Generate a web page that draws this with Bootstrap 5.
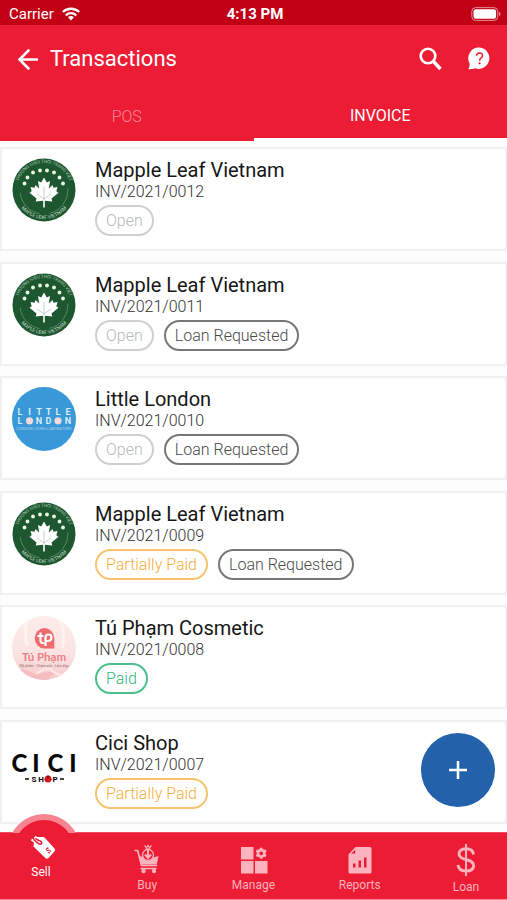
<!DOCTYPE html>
<html lang="en">
<head>
<meta charset="utf-8">
<meta name="viewport" content="width=device-width, initial-scale=1">
<title>Transactions</title>
<link href="https://cdn.jsdelivr.net/npm/bootstrap@5.3.0/dist/css/bootstrap.min.css" rel="stylesheet">
<style>
  :root { --brand: #ed1c35; --brand-dark: #c20015; --pale: #fdb3bd; }
  body { font-family: Roboto, "Liberation Sans", sans-serif; background: #fdfdfd; color: #1d1d1d; }
  a { text-decoration: none; }
  svg { display: block; flex: none; }
  .status-bar { background: var(--brand-dark); height: 25px; padding: 2px 6px 0 9px; font-size: 15px; line-height: 24px; }
  .status-bar > * { flex: 1 1 0; }
  .app-header { background: var(--brand); }
  .title-row { height: 68px; padding: 0 16px; }
  .title-row h1 { font-size: 22px; line-height: 28px; font-weight: 400; margin: 0 auto 0 10px; }
  .icon-btn { background: none; border: 0; padding: 0; color: #fff; }
  .tab-link { flex: 1 1 0; height: 48px; font-size: 16px; line-height: 24px; color: #ff8795; font-weight: 300; border: 0; background: none; }
  .tab-link.current { color: #fff; font-weight: 400; border-bottom: 3px solid #fff; }
  .invoice-list { padding: 6px 0 8px; }
  .invoice { min-height: 104px; padding: 9px 10px; gap: 19px; background: #fff; border: 2px solid #f0f0f0; color: inherit; }
  .invoice h2 { font-size: 20px; line-height: 24px; font-weight: 400; color: #161616; }
  .number { font-size: 16px; line-height: 20px; font-weight: 300; color: #333; }
  .pills { margin-top: 3px; gap: 10px; }
  .pill { border: 2px solid; border-radius: 16px; padding: 0 9px; height: 31px; font-size: 16px; line-height: 28px; font-weight: 300; }
  .open { color: #b9b9b9; border-color: #d0d0d0; }
  .loan { color: #4a4a4a; border-color: #777; }
  .partial { color: #f5ad3d; border-color: #f8c36e; }
  .paid { color: #2fb67c; border-color: #4bbf8d; }
  .fab { position: absolute; right: 12px; bottom: 25px; width: 74px; height: 74px; background: #2361ab; color: #fff; border: 0; }
  .bottom-nav { background: var(--brand); height: 68px; padding: 0 9px; border-top: 1px solid #f24a5e; border-bottom: 1px solid #f88794; }
  .nav-tab { width: 64px; padding-top: 11px; gap: 3px; color: var(--pale); font-size: 12px; line-height: 16px; }
  .nav-tab.current { padding-top: 2px; color: #fff; }
  .nav-tab.current svg, .nav-tab.current span { position: relative; z-index: 2; }
  .nav-tab.current::before { content: ""; position: absolute; left: 8px; top: -19px; width: 72px; height: 72px; border-radius: 50%; background: #f78491; clip-path: inset(0 0 53px 0); }
  .nav-tab.current::after { content: ""; position: absolute; left: 14px; top: -13px; width: 60px; height: 60px; border-radius: 50%; background: var(--brand); }
</style>
<script src="https://cdn.jsdelivr.net/npm/bootstrap@5.3.0/dist/js/bootstrap.bundle.min.js"></script>
</head>
<body>
<svg width="0" height="0" class="position-absolute" aria-hidden="true">
  <defs>
    <path id="arc-top" d="M5 32a27 27 0 0 1 54 0"/>
    <path id="arc-bottom" d="M3 32a29 29 0 0 0 58 0"/>
    <symbol id="maple" viewBox="0 0 64 64">
      <circle cx="32" cy="32" r="31.500" fill="#1d5730"/>
      <circle cx="32" cy="32" r="24" fill="none" stroke="#6f9a78" stroke-width=".7" stroke-dasharray="32 10 30 76"/>
      <text font-size="4.500" fill="#a9c5ae" text-anchor="middle"><textPath href="#arc-top" startOffset="50%">THƯƠNG HIỆU THỜI TRANG VIỆT</textPath></text>
      <text font-size="5" fill="#c6d9c9" text-anchor="middle"><textPath href="#arc-bottom" startOffset="50%">MAPLE LEAF VIETNAM</textPath></text>
      <g fill="#e9f6e4"><circle cx="12.500" cy="25.500" r="1.900"/><circle cx="15.500" cy="19.500" r="1.900"/><circle cx="21" cy="14.500" r="1.900"/><circle cx="28" cy="12.500" r="1.900"/><circle cx="35" cy="12.500" r="1.900"/><circle cx="42" cy="14.500" r="1.900"/><circle cx="47.500" cy="19.500" r="1.900"/><circle cx="51" cy="25.500" r="1.900"/></g>
      <path fill="#fff" d="M32 19.500L34.800 24.500 38 23 36.800 30.500 40.500 27 41.500 29.700 45.500 29 44.300 33.300 46.500 34.800 39.500 40.500 40.300 43.500 32.800 42.700V49.500H31.200V42.700L23.700 43.500 24.500 40.500 17.500 34.800 19.700 33.300 18.500 29 22.500 29.700 23.500 27 27.200 30.500 26 23 29.200 24.500z"/>
      <path d="M32 29v13m0-1l7-5m-7 5l-7-5" stroke="#9db5a1" stroke-width=".6" fill="none"/>
    </symbol>
  </defs>
</svg>
<div class="d-flex flex-column min-vh-100">
  <div class="status-bar d-flex align-items-center text-white">
    <div class="d-flex align-items-center gap-2">
      <span>Carrier</span>
      <svg width="18" height="14" viewBox="0 0 18 14" fill="none" stroke="#fff" stroke-width="2.300"><path d="M.8 5a12 12 0 0 1 16.400 0M3.800 8.300a7.500 7.500 0 0 1 10.400 0"/><path d="M9 13.500l-3-3.200a4.200 4.200 0 0 1 6 0z" fill="#fff" stroke="none"/></svg>
    </div>
    <div class="text-center fw-bold">4:13 PM</div>
    <div class="d-flex justify-content-end">
      <svg width="30" height="14" viewBox="0 0 30 14"><rect x=".8" y=".6" width="26" height="12.800" rx="3.800" fill="none" stroke="#e58a94"/><rect x="2.500" y="2.300" width="22.600" height="9.400" rx="2.200" fill="#fff"/><path d="M28 4.800q1.600.6 1.600 2.200T28 9.200z" fill="#e58a94"/></svg>
    </div>
  </div>
  <header class="app-header">
    <div class="title-row d-flex align-items-center text-white">
      <button class="icon-btn" aria-label="Back"><svg width="24" height="24" viewBox="0 0 24 24" fill="none" stroke="currentColor" stroke-width="2.600" stroke-linecap="round"><path d="M21 12.500H3.500M12.500 3.500l-9 9 9 9"/></svg></button>
      <h1>Transactions</h1>
      <button class="icon-btn" aria-label="Search"><svg width="24" height="24" viewBox="0 0 24 24" fill="none" stroke="currentColor"><circle cx="9" cy="9" r="7.300" stroke-width="2.600"/><path d="M14.500 14.500l7 7.500" stroke-width="3.500"/></svg></button>
      <button class="icon-btn ms-4" aria-label="Help"><svg width="24" height="24" viewBox="0 0 24 24"><path d="M12.500.5a10.700 10.700 0 1 1-4.300 20.800q-2.500 1-6.900.9 1.700-2.500 1.200-6A10.700 10.700 0 0 1 12.500.5z" fill="#fff"/><path d="M9.500 8.800q.2-2.800 3.100-2.800 3 .1 2.900 2.700 0 1.500-1.600 2.500-1.300.9-1.300 2.600" fill="none" stroke="#ed1c35" stroke-width="1.500"/><circle cx="12.600" cy="16.300" r="1.100" fill="#ed1c35"/></svg></button>
    </div>
    <div class="d-flex" role="tablist">
      <button class="tab-link" role="tab" aria-selected="false">POS</button>
      <button class="tab-link current" role="tab" aria-selected="true">INVOICE</button>
    </div>
  </header>
  <main class="invoice-list flex-grow-1 d-flex flex-column justify-content-between position-relative">
    <a href="#" class="invoice d-flex align-items-start">
      <svg width="64" height="64"><use href="#maple"/></svg>
      <div><h2 class="m-0">Mapple Leaf Vietnam</h2><div class="number">INV/2021/0012</div>
      <div class="pills d-flex"><span class="pill open">Open</span></div></div>
    </a>
    <a href="#" class="invoice d-flex align-items-start">
      <svg width="64" height="64"><use href="#maple"/></svg>
      <div><h2 class="m-0">Mapple Leaf Vietnam</h2><div class="number">INV/2021/0011</div>
      <div class="pills d-flex"><span class="pill open">Open</span><span class="pill loan">Loan Requested</span></div></div>
    </a>
    <a href="#" class="invoice d-flex align-items-start">
      <svg width="64" height="64" viewBox="0 0 64 64" text-anchor="middle"><circle cx="32" cy="32" r="32" fill="#3898d8"/>
        <g fill="#dcecf5" font-size="9" font-weight="700"><text y="28"><tspan x="8">L</tspan><tspan x="17.500">I</tspan><tspan x="27">T</tspan><tspan x="36.500">T</tspan><tspan x="46">L</tspan><tspan x="56">E</tspan></text><text y="37"><tspan x="8">L</tspan><tspan x="27">N</tspan><tspan x="36.500">D</tspan><tspan x="56">N</tspan></text></g>
        <circle cx="17.500" cy="33.800" r="3.600" fill="#f7d9d9"/><circle cx="46" cy="33.800" r="3.600" fill="#f7d9d9"/>
        <text x="32" y="42.500" font-size="4" fill="#a5d0ee">LONDON LIVING LABORATORY</text></svg>
      <div><h2 class="m-0">Little London</h2><div class="number">INV/2021/0010</div>
      <div class="pills d-flex"><span class="pill open">Open</span><span class="pill loan">Loan Requested</span></div></div>
    </a>
    <a href="#" class="invoice d-flex align-items-start">
      <svg width="64" height="64"><use href="#maple"/></svg>
      <div><h2 class="m-0">Mapple Leaf Vietnam</h2><div class="number">INV/2021/0009</div>
      <div class="pills d-flex"><span class="pill partial">Partially Paid</span><span class="pill loan">Loan Requested</span></div></div>
    </a>
    <a href="#" class="invoice d-flex align-items-start">
      <svg width="64" height="64" viewBox="0 0 64 64" text-anchor="middle">
        <defs><linearGradient id="blush" x2="0" y2="1"><stop offset="0" stop-color="#fcecea"/><stop offset=".6" stop-color="#fbe3e2"/><stop offset="1" stop-color="#f8c8ca"/></linearGradient><clipPath id="round"><circle cx="32" cy="32" r="32"/></clipPath></defs>
        <g clip-path="url(#round)"><path fill="url(#blush)" d="M0 0h64v64H0z"/><path d="M15 0q-3 18 0 30M47 0q7 18 3 32" stroke="#fff3f0" stroke-width="3" fill="none"/><path d="M0 52q15 1 25 7 12-5 20-2-9 3-8 8H0z" fill="#f5bcc0"/><path d="M25 57q8-5 14-4 2 4 10 6" stroke="#fde9e8" stroke-width="2" fill="none"/></g>
        <path d="M32 12a10.300 10.300 0 0 1 10.300 10.300V32.500H32a10.300 10.300 0 0 1 0-20.500z" fill="#ee6b70"/>
        <path d="M28.500 16.500v8q0 3 3.500 2.500M25.500 20h6M33.500 30v-8.500q0-3 3-3t3 3-3 3.500h-3" fill="none" stroke="#fff" stroke-width="2.200"/>
        <text x="32" y="45" font-size="11.500" font-family="Lato, sans-serif" font-weight="700" fill="#ed8089">Tú Phạm</text>
        <text x="32" y="51" font-size="3.500" fill="#906b6b">Mỹ phẩm · Chăm sóc · Làm đẹp</text></svg>
      <div><h2 class="m-0">Tú Phạm Cosmetic</h2><div class="number">INV/2021/0008</div>
      <div class="pills d-flex"><span class="pill paid">Paid</span></div></div>
    </a>
    <a href="#" class="invoice d-flex align-items-start">
      <svg width="64" height="64" viewBox="0 0 64 64" text-anchor="middle" fill="#080808">
        <g font-size="24" font-weight="900" font-family="Lato, sans-serif"><text y="41"><tspan x="7.500">C</tspan><tspan x="24">I</tspan><tspan x="43.500">C</tspan><tspan x="61">I</tspan></text></g>
        <g font-size="8" font-weight="700"><text y="51"><tspan x="22">S</tspan><tspan x="29">H</tspan><tspan x="43">P</tspan></text></g>
        <path d="M13 48h4M48 48h4" stroke="#080808" stroke-width="1.400"/>
        <circle cx="36" cy="48" r="3.500" fill="#df1820"/><path d="M36 44.500v3M34 49.500l-1-1M38.500 49l1-1" stroke="#300" stroke-width="1"/></svg>
      <div><h2 class="m-0">Cici Shop</h2><div class="number">INV/2021/0007</div>
      <div class="pills d-flex"><span class="pill partial">Partially Paid</span></div></div>
    </a>
    <button class="fab rounded-circle d-flex align-items-center justify-content-center p-0" aria-label="Add invoice"><svg width="18" height="18" viewBox="0 0 18 18" stroke="#fff" stroke-width="2.500"><path d="M9 0v18M0 9h18"/></svg></button>
  </main>
  <nav class="bottom-nav d-flex justify-content-between sticky-bottom">
    <a href="#" class="nav-tab current d-flex flex-column align-items-center" aria-current="page">
      <svg class="ms-1" width="26" height="26" viewBox="0 0 26 26"><path d="M4.500 2h8.500q1 0 2 .9L24.500 13.500q1.500 1.700 0 3L18.500 23q-1.600 1.500-3.200 0L3.500 11.500z" fill="#fff"/><path d="M1.500 4.500l8.300 5.800M5 1.500l3.500 4.200" stroke="#fff" stroke-width="2.200"/><path d="M3.500 4.500l5.500 4.300q3 1.300 2.700-1.300-.7-1.900-3-2L5.200 3.400" fill="none" stroke="#ed1c35" stroke-width="1.500"/><path d="M18.500 13q-3 .3-2.200 2 1.300 1 2.700.2 1.700-.4 1.500 1.100-.5 1.500-2.500 1.200M17 12.500l1.300 1.200m-.2 3.700l1.200 1.200" fill="none" stroke="#ed1c35" stroke-width="1"/></svg>
      <span>Sell</span>
    </a>
    <a href="#" class="nav-tab d-flex flex-column align-items-center">
      <svg width="26" height="30" viewBox="0 0 26 30" fill="none" stroke="#fdb3bd"><path d="M.5 6.500h3.200l3.800 15h15.700" stroke-width="1.700"/><path d="M5 11.500l5 2.300a5 5 0 0 0 7.500.2L24.500 12l-1.700 8.500H7.500z" fill="#fdb3bd" stroke="none"/><circle cx="14" cy="11" r="5.500" fill="#ed1c35" stroke-width="1.300"/><path d="M14 6v7M11 10.500l3 3.500 3-3.500" stroke-width="2"/><path d="M10.500 1.300l1.800 2.500L14 1.500l1.700 2.300 1.800-2.500M11.500 5h5" stroke-width="1.200"/><path d="M6.500 24.500h16" stroke-width="1.500"/><circle cx="9.500" cy="27" r="2.200" fill="#fdb3bd" stroke="none"/><circle cx="20" cy="27" r="2.200" fill="#fdb3bd" stroke="none"/></svg>
      <span>Buy</span>
    </a>
    <a href="#" class="nav-tab d-flex flex-column align-items-center">
      <svg width="28" height="30" viewBox="0 0 28 30" fill="#fdb3bd"><path d="M1 3h12.500v12.500H1zM1 17h12.500v12.500H1zM15 17h12.500v12.500H15z"/><circle cx="21.200" cy="9.300" r="3.200" fill="none" stroke="#fdb3bd" stroke-width="2.600"/><g stroke="#fdb3bd" stroke-width="2.800"><path d="M21.200 3.800v2M21.200 12.800v2M16.400 6.500l1.800 1M24.200 11.100l1.800 1M16.400 12.100l1.800-1M24.200 7.500l1.800-1"/></g></svg>
      <span>Manage</span>
    </a>
    <a href="#" class="nav-tab d-flex flex-column align-items-center">
      <svg width="24" height="30" viewBox="0 0 24 30"><path d="M7.500 3H22q1.500 0 1.500 1.500V28q0 1.500-1.500 1.500H2Q.5 29.500.5 28V10.500z" fill="#fdb3bd"/><path d="M3.300 9.500L7.200 5.700v3.800z" fill="#ed1c35"/><path d="M5 19.500h2.500v4H5zM10.500 16.500H13v7h-2.500zM16 13.500h2.500v10H16z" fill="#ed1c35"/></svg>
      <span>Reports</span>
    </a>
    <a href="#" class="nav-tab d-flex flex-column align-items-center">
      <svg width="20" height="32" viewBox="0 0 20 32" fill="none" stroke="#fdb3bd"><path d="M17.500 10.500Q17 4.800 10 4.800q-6.700.3-7 5.200.2 4 7 5.500 7.800 1.800 7.700 6.500-.5 5-7.700 5-7.500-.2-8-6.200" stroke-width="2.900"/><path d="M10 0v32" stroke-width="2"/></svg>
      <span>Loan</span>
    </a>
  </nav>
</div>
</body>
</html>
